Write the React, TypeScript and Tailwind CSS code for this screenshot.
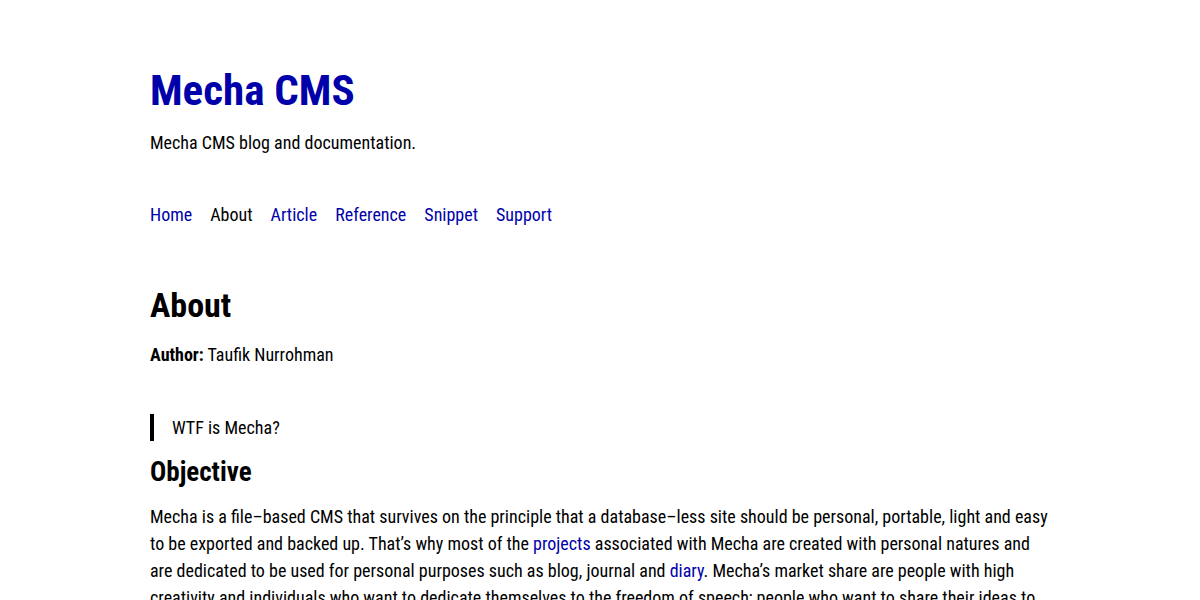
const link = "text-[#0000aa] no-underline"

export default function App() {
  return (
    <div
      className="min-h-[600px] bg-white text-black text-[18px] leading-[1.5]"
      style={{ fontFamily: '"Roboto Condensed", Roboto, "Liberation Sans", sans-serif', fontStretch: "condensed" }}
    >
      <div className="mx-auto w-[900px] pt-[64px]">
        <header>
          <h1 className="text-[43px] font-bold leading-[1.25]">
            <a href="#" className={link}>Mecha CMS</a>
          </h1>
          <p className="mt-[11px]">Mecha CMS blog and documentation.</p>
        </header>
        <nav className="mt-[45px] flex gap-[18px]">
          <a href="#" className={link}>Home</a>
          <span>About</span>
          <a href="#" className={link}>Article</a>
          <a href="#" className={link}>Reference</a>
          <a href="#" className={link}>Snippet</a>
          <a href="#" className={link}>Support</a>
        </nav>
        <main className="mt-[56px]">
          <h2 className="text-[34px] font-bold leading-[1.25]">About</h2>
          <p className="mt-[15px]">
            <strong>Author:</strong> Taufik Nurrohman
          </p>
          <blockquote className="mt-[46px] border-l-4 border-black pl-[18px]">
            <p>WTF is Mecha?</p>
          </blockquote>
          <h3 className="mt-[15px] text-[27px] font-bold leading-[1.25]">Objective</h3>
          <p className="mt-[13px]">
            Mecha is a file–based CMS that survives on the principle that a database–less site should be personal, portable, light and easy
            to be exported and backed up. That’s why most of the <a href="#" className={link}>projects</a> associated with Mecha are created with personal natures and
            are dedicated to be used for personal purposes such as blog, journal and <a href="#" className={link}>diary</a>. Mecha’s market share are people with high
            creativity and individuals who want to dedicate themselves to the freedom of speech; people who want to share their ideas to
            the world.
          </p>
        </main>
      </div>
    </div>
  )
}
